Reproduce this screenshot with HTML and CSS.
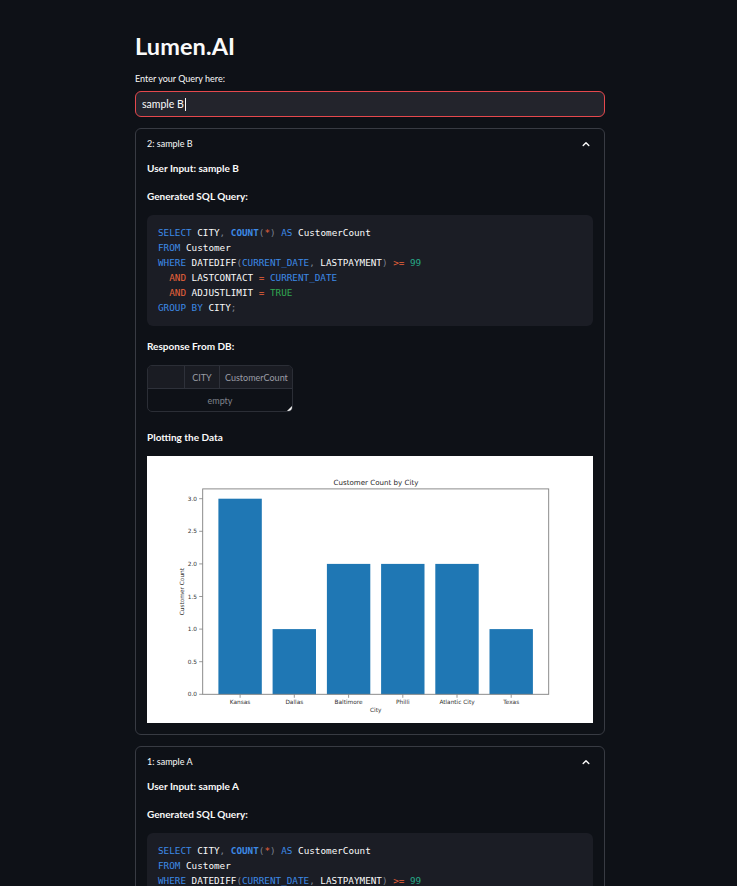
FILE: index.html
```html
<!DOCTYPE html>
<html lang="en">
<head>
<meta charset="utf-8">
<title>Lumen.AI</title>
<link rel="stylesheet" href="styles.css">
</head>
<body>
<div class="app">
  <main class="main">
    <h1 class="title">Lumen.AI</h1>
    <label class="field-label" for="q">Enter your Query here:</label>
    <div class="input-box" id="q"><span class="input-text">sample B</span><span class="caret"></span></div>

    <section class="expander">
      <div class="exp-header">
        <span class="exp-title">2: sample B</span>
        <svg class="chev" width="10" height="6" viewBox="0 0 10 6"><polyline points="2.2,4.6 5,1.8 7.8,4.6" fill="none" stroke="#fafafa" stroke-width="1.4" stroke-linecap="round" stroke-linejoin="round"/></svg>
      </div>
      <p class="strong">User Input: sample B</p>
      <p class="strong gen">Generated SQL Query:</p>
      <pre class="code"><span class="kw">SELECT</span> CITY<span class="pu">,</span> <span class="fn">COUNT</span><span class="pu">(</span><span class="op">*</span><span class="pu">)</span> <span class="kw">AS</span> CustomerCount
<span class="kw">FROM</span> Customer
<span class="kw">WHERE</span> DATEDIFF<span class="pu">(</span><span class="kw">CURRENT_DATE</span><span class="pu">,</span> LASTPAYMENT<span class="pu">)</span> <span class="op">&gt;=</span> <span class="num">99</span>
  <span class="op">AND</span> LASTCONTACT <span class="op">=</span> <span class="kw">CURRENT_DATE</span>
  <span class="op">AND</span> ADJUSTLIMIT <span class="op">=</span> <span class="bool">TRUE</span>
<span class="kw">GROUP BY</span> CITY<span class="pu">;</span></pre>
      <p class="strong resp">Response From DB:</p>
      <div class="table">
        <div class="thead">
          <div class="th idx"></div>
          <div class="th city">CITY</div>
          <div class="th cnt">CustomerCount</div>
        </div>
        <div class="empty">empty</div>
        <span class="resize"></span>
      </div>
      <p class="strong plot">Plotting the Data</p>
      <div class="chart">
        <svg width="446" height="267" viewBox="0 0 446 267">
          <rect x="0" y="0" width="446" height="267" fill="#ffffff"/>
          <text x="229" y="28.5" class="ct-title" text-anchor="middle">Customer Count by City</text>
          <g fill="#1f77b4">
            <rect x="71.4" y="42.7" width="43.4" height="195.6"/>
            <rect x="125.6" y="173.1" width="43.4" height="65.2"/>
            <rect x="179.9" y="107.9" width="43.4" height="130.4"/>
            <rect x="234.1" y="107.9" width="43.4" height="130.4"/>
            <rect x="288.3" y="107.9" width="43.4" height="130.4"/>
            <rect x="342.5" y="173.1" width="43.4" height="65.2"/>
          </g>
          <rect x="55.7" y="32.9" width="346" height="205.4" fill="none" stroke="#7f7f7f" stroke-width="0.9"/>
          <g stroke="#7f7f7f" stroke-width="0.8">
            <line x1="52.2" y1="238.3" x2="55.7" y2="238.3"/>
            <line x1="52.2" y1="205.7" x2="55.7" y2="205.7"/>
            <line x1="52.2" y1="173.1" x2="55.7" y2="173.1"/>
            <line x1="52.2" y1="140.5" x2="55.7" y2="140.5"/>
            <line x1="52.2" y1="107.9" x2="55.7" y2="107.9"/>
            <line x1="52.2" y1="75.3" x2="55.7" y2="75.3"/>
            <line x1="52.2" y1="42.7" x2="55.7" y2="42.7"/>
            <line x1="93.1" y1="238.3" x2="93.1" y2="241.8"/>
            <line x1="147.3" y1="238.3" x2="147.3" y2="241.8"/>
            <line x1="201.6" y1="238.3" x2="201.6" y2="241.8"/>
            <line x1="255.8" y1="238.3" x2="255.8" y2="241.8"/>
            <line x1="310.0" y1="238.3" x2="310.0" y2="241.8"/>
            <line x1="364.2" y1="238.3" x2="364.2" y2="241.8"/>
          </g>
          <g class="ct-tick" text-anchor="end">
            <text x="50" y="240.4">0.0</text>
            <text x="50" y="207.8">0.5</text>
            <text x="50" y="175.2">1.0</text>
            <text x="50" y="142.6">1.5</text>
            <text x="50" y="110.0">2.0</text>
            <text x="50" y="77.4">2.5</text>
            <text x="50" y="44.8">3.0</text>
          </g>
          <g class="ct-tick" text-anchor="middle">
            <text x="93.1" y="247.8">Kansas</text>
            <text x="147.3" y="247.8">Dallas</text>
            <text x="201.6" y="247.8">Baltimore</text>
            <text x="255.8" y="247.8">Philli</text>
            <text x="310.0" y="247.8">Atlantic City</text>
            <text x="364.2" y="247.8">Texas</text>
          </g>
          <text x="228.7" y="256.2" class="ct-tick" text-anchor="middle">City</text>
          <text x="0" y="0" class="ct-tick" text-anchor="middle" transform="translate(37.2 135.6) rotate(-90)">Customer Count</text>
        </svg>
      </div>
    </section>

    <section class="expander">
      <div class="exp-header">
        <span class="exp-title">1: sample A</span>
        <svg class="chev" width="10" height="6" viewBox="0 0 10 6"><polyline points="2.2,4.6 5,1.8 7.8,4.6" fill="none" stroke="#fafafa" stroke-width="1.4" stroke-linecap="round" stroke-linejoin="round"/></svg>
      </div>
      <p class="strong">User Input: sample A</p>
      <p class="strong gen">Generated SQL Query:</p>
      <pre class="code"><span class="kw">SELECT</span> CITY<span class="pu">,</span> <span class="fn">COUNT</span><span class="pu">(</span><span class="op">*</span><span class="pu">)</span> <span class="kw">AS</span> CustomerCount
<span class="kw">FROM</span> Customer
<span class="kw">WHERE</span> DATEDIFF<span class="pu">(</span><span class="kw">CURRENT_DATE</span><span class="pu">,</span> LASTPAYMENT<span class="pu">)</span> <span class="op">&gt;=</span> <span class="num">99</span>
  <span class="op">AND</span> LASTCONTACT <span class="op">=</span> <span class="kw">CURRENT_DATE</span>
  <span class="op">AND</span> ADJUSTLIMIT <span class="op">=</span> <span class="bool">TRUE</span>
<span class="kw">GROUP BY</span> CITY<span class="pu">;</span></pre>
      <p class="strong resp">Response From DB:</p>
      <div class="table">
        <div class="thead">
          <div class="th idx"></div>
          <div class="th city">CITY</div>
          <div class="th cnt">CustomerCount</div>
        </div>
        <div class="empty">empty</div>
        <span class="resize"></span>
      </div>
    </section>
  </main>
</div>
</body>
</html>
```

FILE: styles.css
```css
* { box-sizing: border-box; }
html, body {
  margin: 0;
  padding: 0;
  background: #0e1117;
}
body {
  color: #fafafa;
  font-family: Lato, "Noto Sans", sans-serif;
}
.app {
  padding: 31px 0 40px 3px;
}
.main {
  width: 470px;
  margin: 0 auto;
  display: flex;
  flex-direction: column;
}
.title {
  margin: 0;
  font-size: 23.5px;
  line-height: 30px;
  font-weight: 700;
  letter-spacing: 0.1px;
}
.field-label {
  margin-top: 12px;
  font-size: 9px;
  line-height: 12px;
  color: #fafafa;
}
.input-box {
  margin-top: 6px;
  height: 26px;
  border: 1px solid #e5484d;
  border-radius: 6px;
  background: #23242c;
  display: flex;
  align-items: center;
  padding: 0 6px;
}
.input-text {
  font-size: 10.5px;
  color: #fafafa;
}
.caret {
  display: inline-block;
  width: 1px;
  height: 13px;
  background: #fafafa;
  margin-left: 1px;
}
.expander {
  margin-top: 11px;
  border: 1px solid #383b43;
  border-radius: 6px;
  padding: 9px 11px 11px;
  display: flex;
  flex-direction: column;
  gap: 12px;
}
.exp-header {
  height: 12px;
  display: flex;
  align-items: center;
  justify-content: space-between;
}
.exp-title {
  font-size: 9px;
  line-height: 12px;
}
.chev {
  margin-right: 2px;
}
.strong {
  margin: 0;
  font-size: 10px;
  line-height: 14px;
  font-weight: 700;
}
.exp-header + .strong { margin-top: -1px; }
.gen { margin-top: 2px; }
.resp { margin-top: 1px; }
.plot { margin-top: 6px; }
.code {
  margin: 0;
  background: #1b1d25;
  border-radius: 6px;
  padding: 10px 11px 11px;
  font-family: "DejaVu Sans Mono", "Liberation Mono", monospace;
  font-size: 9.3px;
  line-height: 15px;
  color: #fafafa;
  white-space: pre;
}
.kw { color: #3d8ae6; }
.fn { color: #3d8ae6; font-weight: 700; }
.pu { color: #7d838f; }
.op { color: #e8623b; }
.num { color: #27a987; }
.bool { color: #32a852; }
.table {
  position: relative;
  width: 146px;
  height: 47px;
  border: 1px solid #2b2e36;
  border-radius: 5px;
  overflow: hidden;
  font-size: 9px;
}
.thead {
  display: flex;
  height: 23px;
  background: #1a1c23;
  border-bottom: 1px solid #2e313a;
}
.th {
  display: flex;
  align-items: center;
  justify-content: center;
  color: #9a9da6;
  border-right: 1px solid #2e313a;
}
.idx { width: 37px; }
.city { width: 35px; }
.cnt { width: 72px; border-right: none; justify-content: flex-start; padding-left: 5px; }
.empty {
  height: 22px;
  display: flex;
  align-items: center;
  justify-content: center;
  color: #7f838c;
}
.resize {
  position: absolute;
  right: 0;
  bottom: 0;
  width: 0;
  height: 0;
  border-left: 5px solid transparent;
  border-bottom: 5px solid #f0f0f0;
}
.chart {
  height: 267px;
  width: 446px;
  background: #ffffff;
}
.chart svg { display: block; }
.ct-title {
  font-family: "DejaVu Sans", sans-serif;
  font-size: 7.1px;
  fill: #262626;
}
.ct-tick {
  font-family: "DejaVu Sans", sans-serif;
  font-size: 5.8px;
  fill: #333333;
}
```
